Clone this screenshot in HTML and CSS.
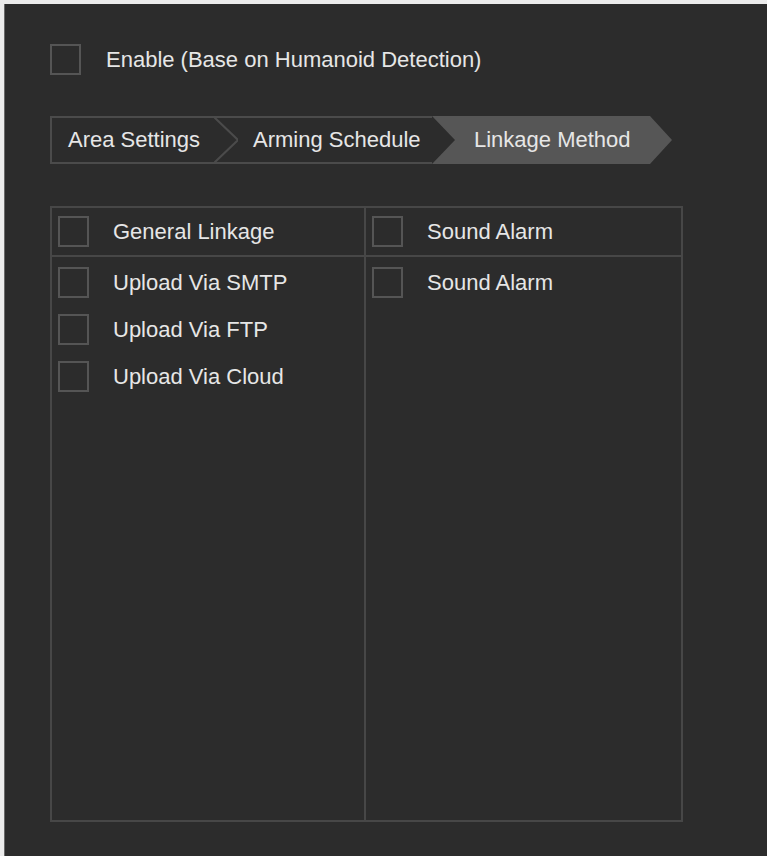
FILE: index.html
```html
<!DOCTYPE html>
<html lang="en">
<head>
    <meta charset="UTF-8">
    <meta name="viewport" content="width=device-width, initial-scale=1.0">
    <title>Linkage Method</title>
    <link rel="stylesheet" href="styles.css">
</head>
<body>
    <div class="panel">
        <label class="enable-row">
            <span class="check"></span>
            <span>Enable (Base on Humanoid Detection)</span>
        </label>

        <nav class="steps">
            <div class="step step-first">Area Settings</div>
            <svg class="step-sep" width="24" height="48" viewBox="0 0 24 48">
                <polyline points="0,1 24,24 0,47" fill="none" stroke="#4b4b4b" stroke-width="2"/>
                <line x1="0" y1="1" x2="24" y2="1" stroke="#4b4b4b" stroke-width="2"/>
                <line x1="0" y1="47" x2="24" y2="47" stroke="#4b4b4b" stroke-width="2"/>
            </svg>
            <div class="step step-mid">Arming Schedule</div>
            <div class="step step-active">Linkage Method</div>
        </nav>

        <div class="lists">
            <div class="col">
                <div class="row row-head">
                    <span class="check"></span>
                    <span>General Linkage</span>
                </div>
                <div class="rows">
                    <div class="row"><span class="check"></span><span>Upload Via SMTP</span></div>
                    <div class="row"><span class="check"></span><span>Upload Via FTP</span></div>
                    <div class="row"><span class="check"></span><span>Upload Via Cloud</span></div>
                </div>
            </div>
            <div class="col col-right">
                <div class="row row-head">
                    <span class="check"></span>
                    <span>Sound Alarm</span>
                </div>
                <div class="rows">
                    <div class="row"><span class="check"></span><span>Sound Alarm</span></div>
                </div>
            </div>
        </div>
    </div>
</body>
</html>
```

FILE: styles.css
```css
body {
    margin: 0;
    padding: 0;
    background-color: #ececec;
    font-family: "Liberation Sans", Arial, sans-serif;
    font-size: 22px;
    color: #e6e6e6;
}
.panel {
    margin: 4px 0 0 4px;
    min-height: 852px;
    box-sizing: border-box;
    background-color: #2c2c2c;
    border-left: 1px solid #6a6a6a;
    padding: 40px 0 0 45px;
}
.check {
    display: inline-block;
    width: 31px;
    height: 31px;
    box-sizing: border-box;
    border: 2px solid #555;
    flex-shrink: 0;
}
.enable-row {
    display: flex;
    align-items: center;
    gap: 25px;
    height: 31px;
}
.steps {
    display: flex;
    height: 48px;
    margin-top: 41px;
}
.step {
    box-sizing: border-box;
    height: 48px;
    display: flex;
    align-items: center;
    white-space: nowrap;
    border-top: 2px solid #4b4b4b;
    border-bottom: 2px solid #4b4b4b;
}
.step-first {
    border-left: 2px solid #4b4b4b;
    padding: 0 14px 0 16px;
    width: 164px;
}
.step-mid {
    padding-left: 15px;
    width: 194px;
}
.step-active {
    border: none;
    width: 240px;
    padding-left: 42px;
    background-color: #565656;
    clip-path: polygon(0 0, 218px 0, 240px 24px, 218px 48px, 0 48px, 23px 24px);
}
.lists {
    display: grid;
    grid-template-columns: 316px 317px;
    height: 616px;
    margin-top: 42px;
}
.col {
    box-sizing: border-box;
    border: 2px solid #474747;
}
.col-right {
    border-left: none;
}
.row {
    display: flex;
    align-items: center;
    gap: 24px;
    height: 47px;
    padding-left: 6px;
}
.row-head {
    border-bottom: 2px solid #474747;
}
.rows {
    padding-top: 2px;
}
```
